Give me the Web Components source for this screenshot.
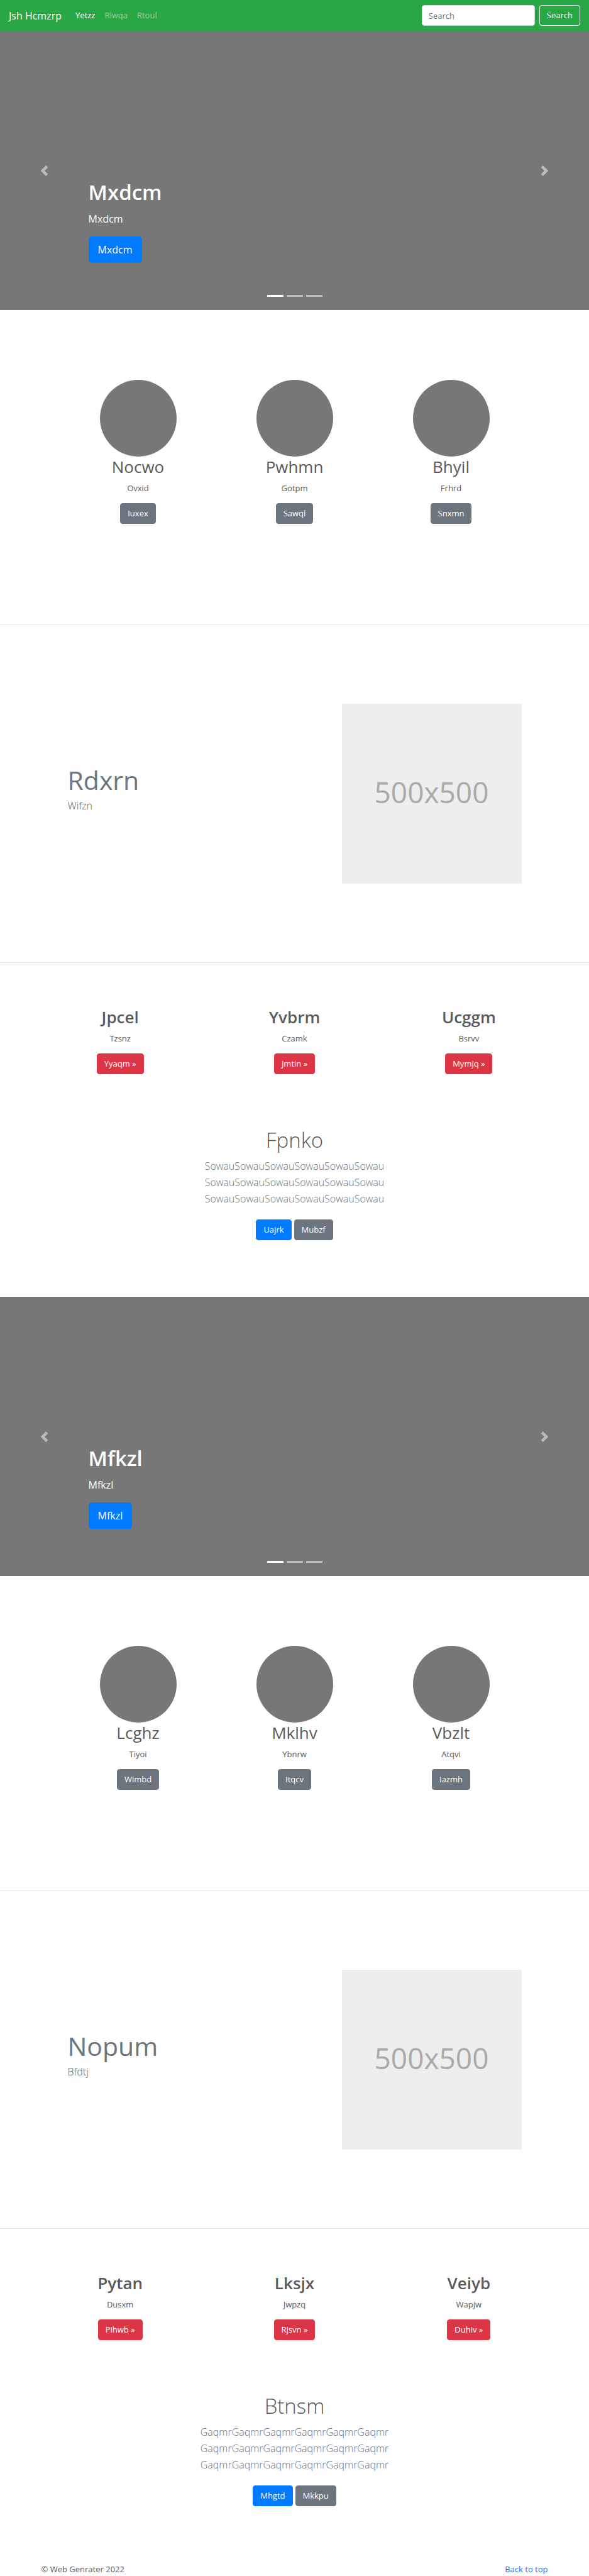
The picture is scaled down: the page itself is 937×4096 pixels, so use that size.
<!DOCTYPE html>
<html lang="en">
<head>
<meta charset="utf-8">
<meta name="viewport" content="width=device-width, initial-scale=1">
<title>Jsh Hcmzrp</title>
<style>
  body {
    margin: 0;
    background: #fff;
    color: #5a5a5a;
    font: 400 13px/21px "Open Sans", "Noto Sans", sans-serif;
  }
</style>
</head>
<body>
<site-nav></site-nav>
<main id="top">
  <hero-carousel><span slot="title">Mxdcm</span><span slot="text">Mxdcm</span><span slot="action">Mxdcm</span></hero-carousel>
  <card-row variant="round">
    <info-card round tone="secondary"><span slot="title">Nocwo</span><span slot="text">Ovxid</span><span slot="action">Iuxex</span></info-card>
    <info-card round tone="secondary"><span slot="title">Pwhmn</span><span slot="text">Gotpm</span><span slot="action">Sawql</span></info-card>
    <info-card round tone="secondary"><span slot="title">Bhyil</span><span slot="text">Frhrd</span><span slot="action">Snxmn</span></info-card>
  </card-row>
  <feature-block><span slot="title">Rdxrn</span><span slot="text">Wifzn</span></feature-block>
  <card-row>
    <info-card tone="danger"><span slot="title">Jpcel</span><span slot="text">Tzsnz</span><span slot="action">Yyaqm »</span></info-card>
    <info-card tone="danger"><span slot="title">Yvbrm</span><span slot="text">Czamk</span><span slot="action">Jmtin »</span></info-card>
    <info-card tone="danger"><span slot="title">Ucggm</span><span slot="text">Bsrvv</span><span slot="action">Mymjq »</span></info-card>
  </card-row>
  <call-out>
    <span slot="title">Fpnko</span>
    <span slot="text">SowauSowauSowauSowauSowauSowau<br>SowauSowauSowauSowauSowauSowau<br>SowauSowauSowauSowauSowauSowau</span>
    <ui-button slot="action">Uajrk</ui-button>
    <ui-button slot="action" tone="secondary">Mubzf</ui-button>
  </call-out>

  <hero-carousel><span slot="title">Mfkzl</span><span slot="text">Mfkzl</span><span slot="action">Mfkzl</span></hero-carousel>
  <card-row variant="round">
    <info-card round tone="secondary"><span slot="title">Lcghz</span><span slot="text">Tiyoi</span><span slot="action">Wimbd</span></info-card>
    <info-card round tone="secondary"><span slot="title">Mklhv</span><span slot="text">Ybnrw</span><span slot="action">Itqcv</span></info-card>
    <info-card round tone="secondary"><span slot="title">Vbzlt</span><span slot="text">Atqvi</span><span slot="action">Iazmh</span></info-card>
  </card-row>
  <feature-block><span slot="title">Nopum</span><span slot="text">Bfdtj</span></feature-block>
  <card-row>
    <info-card tone="danger"><span slot="title">Pytan</span><span slot="text">Dusxm</span><span slot="action">Pihwb »</span></info-card>
    <info-card tone="danger"><span slot="title">Lksjx</span><span slot="text">Jwpzq</span><span slot="action">Rjsvn »</span></info-card>
    <info-card tone="danger"><span slot="title">Veiyb</span><span slot="text">Wapjw</span><span slot="action">Duhiv »</span></info-card>
  </card-row>
  <call-out>
    <span slot="title">Btnsm</span>
    <span slot="text">GaqmrGaqmrGaqmrGaqmrGaqmrGaqmr<br>GaqmrGaqmrGaqmrGaqmrGaqmrGaqmr<br>GaqmrGaqmrGaqmrGaqmrGaqmrGaqmr</span>
    <ui-button slot="action">Mhgtd</ui-button>
    <ui-button slot="action" tone="secondary">Mkkpu</ui-button>
  </call-out>
</main>
<site-footer></site-footer>

<script>
const define = (name, html) => {
  const template = document.createElement('template');
  template.innerHTML = html;
  customElements.define(name, class extends HTMLElement {
    constructor() {
      super();
      this.attachShadow({ mode: 'open' }).append(template.content.cloneNode(true));
    }
    connectedCallback() {
      // A card hands its tone on to the button inside it.
      const inner = this.shadowRoot.querySelector('ui-button[data-tone]');
      if (inner && this.hasAttribute('tone')) inner.setAttribute('tone', this.getAttribute('tone'));
    }
  });
};

define('ui-button', `
<style>
  :host { display: inline-block; }
  button {
    display: block; box-sizing: border-box; height: 33px; margin: 0; padding: 0 11px;
    border: 1px solid #007bff; border-radius: 4px; background: #007bff;
    color: #fff; font: inherit; line-height: 21px; white-space: nowrap; cursor: pointer;
  }
  :host([tone="secondary"]) button { background: #6c757d; border-color: #6c757d; }
  :host([tone="danger"]) button { background: #dc3545; border-color: #dc3545; }
  :host([tone="outline"]) button { background: transparent; border-color: #f8f9fa; color: #f8f9fa; }
  :host([size="large"]) button { height: 42px; padding: 0 14px; border-radius: 5px; font-size: 16px; }
</style>
<button type="button"><slot></slot></button>`);

define('site-nav', `
<style>
  :host { display: block; background: #28a745; }
  nav { display: flex; align-items: center; padding: 8px 14px; }
  a { color: rgba(255,255,255,.5); text-decoration: none; }
  .brand { color: #fff; font-size: 16px; line-height: 26px; margin-right: 22px; }
  ul { display: flex; gap: 15px; margin: 0; padding: 0; list-style: none; flex: 1; }
  .active { color: #fff; }
  form { display: flex; gap: 7px; }
  input {
    box-sizing: border-box; width: 180px; height: 33px; padding: 0 10px;
    border: 1px solid #ced4da; border-radius: 4px; background: #fff; color: #495057; font: inherit;
  }
  input::placeholder { color: #6c757d; opacity: 1; }
</style>
<nav>
  <a class="brand" href="#">Jsh Hcmzrp</a>
  <ul>
    <li><a class="active" href="#">Yetzz</a></li>
    <li><a href="#">Rlwqa</a></li>
    <li><a href="#">Rtoul</a></li>
  </ul>
  <form role="search">
    <input type="text" placeholder="Search" aria-label="Search">
    <ui-button tone="outline">Search</ui-button>
  </form>
</nav>`);

define('hero-carousel', `
<style>
  :host { display: block; background: #777; color: #fff; }
  .slide { display: grid; grid-template-columns: 15% 1fr 15%; height: 444px; }
  .arrow { display: grid; place-items: center; padding: 0; border: 0; background: none; opacity: .5; cursor: pointer; }
  .arrow svg { width: 17px; height: 17px; fill: #fff; }
  .body { display: flex; flex-direction: column; align-items: flex-start; justify-content: flex-end; }
  h1 { margin: 0 0 7px; font-size: 33px; font-weight: 600; line-height: 42px; }
  p { margin: 0 0 14px; font-size: 16px; line-height: 28px; }
  ol { display: flex; align-self: center; gap: 5px; margin: 51px 0 21px; padding: 0; list-style: none; }
  li { width: 26px; height: 3px; background: #fff; opacity: .5; }
  li.active { opacity: 1; }
</style>
<div class="slide">
  <button class="arrow" type="button" aria-label="Previous"><svg viewBox="0 0 8 8"><path d="M5.25 0l-4 4 4 4 1.5-1.5L4.25 4l2.5-2.5L5.25 0z"/></svg></button>
  <div class="body">
    <h1><slot name="title"></slot></h1>
    <p><slot name="text"></slot></p>
    <ui-button size="large"><slot name="action"></slot></ui-button>
    <ol><li class="active"></li><li></li><li></li></ol>
  </div>
  <button class="arrow" type="button" aria-label="Next"><svg viewBox="0 0 8 8"><path d="M2.75 0l-1.5 1.5L3.75 4l-2.5 2.5L2.75 8l4-4-4-4z"/></svg></button>
</div>`);

define('card-row', `
<style>
  :host { display: block; padding: 70px 0 84px; }
  .row { display: grid; grid-template-columns: repeat(3, 1fr); max-width: 832px; margin: 0 auto; }
  :host([variant="round"]) { padding: 111px 0 160px; }
  :host([variant="round"]) .row { max-width: 747px; }
</style>
<div class="row"><slot></slot></div>`);

define('info-card', `
<style>
  :host { display: flex; flex-direction: column; align-items: center; text-align: center; }
  .disc { display: none; width: 122px; height: 122px; border-radius: 50%; background: #777; }
  :host([round]) .disc { display: block; }
  h2 { margin: 0 0 7px; font-size: 26px; font-weight: 600; line-height: 33px; }
  :host([round]) h2 { font-weight: 400; }
  p { margin: 0 0 13px; }
</style>
<div class="disc"></div>
<h2><slot name="title"></slot></h2>
<p><slot name="text"></slot></p>
<ui-button data-tone><slot name="action"></slot></ui-button>`);

define('feature-block', `
<style>
  :host { display: block; border: solid #e5e5e5; border-width: 1px 0; padding: 125px 0; }
  .row { display: flex; align-items: center; justify-content: space-between; max-width: 722px; margin: 0 auto; }
  h2 { margin: 0 0 2px; color: #6c757d; font-size: 41px; font-weight: 400; line-height: 52px; }
  p { margin: 0 0 16px; font-size: 16px; font-weight: 300; line-height: 26px; }
  .thumb {
    display: grid; place-items: center; box-sizing: border-box; width: 286px; aspect-ratio: 1;
    padding-bottom: 6px; background: #eee; color: #aaa; font-size: 46px; line-height: 52px;
  }
</style>
<div class="row">
  <div><h2><slot name="title"></slot></h2><p><slot name="text"></slot></p></div>
  <div class="thumb">500x500</div>
</div>`);

define('call-out', `
<style>
  :host { display: block; padding-bottom: 90px; text-align: center; }
  h1 { margin: 0 0 7px; font-size: 33px; font-weight: 300; line-height: 42px; }
  p { margin: 0 0 20px; color: #6c757d; font-size: 16px; font-weight: 300; line-height: 26px; }
  .actions { display: flex; justify-content: center; gap: 4px; }
</style>
<h1><slot name="title"></slot></h1>
<p><slot name="text"></slot></p>
<div class="actions"><slot name="action"></slot></div>`);

define('site-footer', `
<style>
  :host { display: block; }
  footer { display: flex; justify-content: space-between; max-width: 806px; margin: 0 auto; }
  a { color: #007bff; text-decoration: none; }
</style>
<footer><span>© Web Genrater 2022</span><a href="#top">Back to top</a></footer>`);
</script>
</body>
</html>
